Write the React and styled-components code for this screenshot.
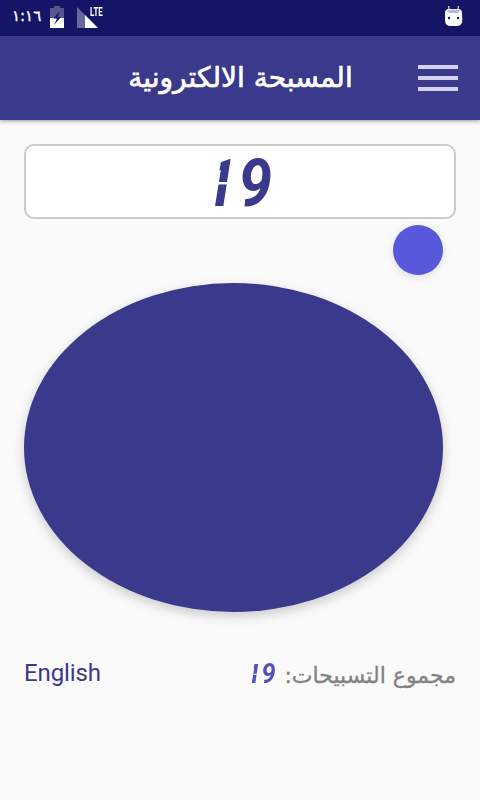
import React from "react";
import styled, { createGlobalStyle } from "styled-components";

const GlobalStyle = createGlobalStyle`
  * { box-sizing: border-box; }
  body { margin: 0; background: #fafafa; }
  button { border: 0; padding: 0; font: inherit; cursor: pointer; }
`;

const Screen = styled.div`
  display: flex;
  flex-direction: column;
  width: 480px;
  height: 800px;
  overflow: hidden;
  background: #fafafa;
  font-family: Roboto, "DejaVu Sans", sans-serif;
`;

const StatusBar = styled.div`
  display: flex;
  flex: none;
  align-items: flex-start;
  height: 36px;
  padding: 0 17px 0 12px;
  background: #141567;
`;

const Clock = styled.span`
  width: 38px;
  font: 15px/33px "DejaVu Sans", sans-serif;
  letter-spacing: -2.6px;
  white-space: nowrap;
  color: #fff;
  -webkit-text-stroke: 0.3px #fff;
`;

const StatusIcon = styled.svg`
  flex: none;
  width: ${(p) => p.$w}px;
  height: ${(p) => p.$h}px;
  margin-top: ${(p) => p.$top}px;
  margin-left: ${(p) => p.$left || 0}px;
`;

const Network = styled.span`
  margin-top: 6px;
  margin-left: -8px;
  font: 700 12px/13px Roboto, sans-serif;
  color: #fff;
  transform: scaleX(0.66);
  transform-origin: left;
`;

const Spacer = styled.div`
  flex: 1;
`;

const AppBar = styled.header`
  display: flex;
  flex: none;
  align-items: center;
  justify-content: space-between;
  height: 84px;
  padding: 0 22px 0 128px;
  background: #3a398b;
  box-shadow: 0 1px 4px rgba(0, 0, 0, 0.4);
`;

const Title = styled.h1`
  display: flex;
  justify-content: center;
  width: 225px;
  margin: 0;
  font: 400 28px/40px "DejaVu Sans", sans-serif;
  white-space: nowrap;
  color: #fff;
  -webkit-text-stroke: 0.7px #fff;
`;

const MenuButton = styled.button`
  display: flex;
  flex-direction: column;
  gap: 7px;
  width: 40px;
  background: none;
`;

const MenuLine = styled.span`
  height: 4px;
  background: #d3d3ef;
`;

const Content = styled.main`
  display: flex;
  flex-direction: column;
  padding: 24px 24px 0;
`;

const Display = styled.div`
  display: flex;
  align-items: center;
  justify-content: center;
  height: 75px;
  padding: 3px 4px 0 0;
  border: 2px solid #cbcbcb;
  border-radius: 10px;
  background: #fff;
`;

const Digits = styled.span`
  display: inline-flex;
  direction: ltr;
  font: italic 700 ${(p) => p.$size}px/0.72 Roboto, sans-serif;
  color: ${(p) => p.$color};
  transform: scaleX(0.9);
`;

/* The one is only a slanted stem, split in the middle like two LED segments. */
const Digit = styled.span`
  display: flex;
  justify-content: center;
  width: 0.58em;
  height: 0.72em;
  ${(p) =>
    p.$stem &&
    `
      clip-path: polygon(53% 0, 100% 0, 100% 100%, 29% 100%);
      mask-image: linear-gradient(#000 47%, transparent 49% 52%, #000 54%);
    `}
`;

const RoundButton = styled.button`
  align-self: ${(p) => (p.$small ? "flex-end" : "flex-start")};
  width: ${(p) => (p.$small ? 50 : 419)}px;
  height: ${(p) => (p.$small ? 50 : 329)}px;
  margin-top: ${(p) => (p.$small ? 6 : 8)}px;
  margin-right: ${(p) => (p.$small ? 13 : 0)}px;
  border-radius: 50%;
  background: ${(p) => (p.$small ? "#5858db" : "#3a398b")};
  box-shadow: ${(p) =>
    p.$small
      ? "0 2px 8px rgba(0, 0, 0, 0.12)"
      : "0 4px 12px rgba(0, 0, 0, 0.2)"};
`;

const Footer = styled.footer`
  display: flex;
  align-items: center;
  justify-content: space-between;
  height: 36px;
  margin-top: 44px;
`;

const Language = styled.button`
  background: none;
  margin-top: -2px;
  font: 24px/32px Roboto, sans-serif;
  letter-spacing: -0.1px;
  color: #3a398b;
`;

const Total = styled.div`
  display: flex;
  align-items: center;
  gap: 7px;
  direction: rtl;
`;

const TotalLabel = styled.span`
  display: flex;
  justify-content: flex-start;
  width: 172px;
  margin-top: 4px;
  font: 22px/32px "DejaVu Sans", sans-serif;
  white-space: nowrap;
  color: #828282;
  -webkit-text-stroke: 0.3px #828282;
`;

function LedNumber({ value, size, color }) {
  return (
    <Digits $size={size} $color={color}>
      {String(value).split("").map((digit, i) => (
        <Digit key={i} $stem={digit === "1"}>{digit}</Digit>
      ))}
    </Digits>
  );
}

export default function App() {
  const count = 19;
  return (
    <Screen>
      <GlobalStyle />
      <StatusBar>
        <Clock>١:١٦</Clock>
        <StatusIcon $w={14} $h={22} $top={6} viewBox="0 0 14 22">
          <path d="M4 0h6v2h4v10H0V2h4z" fill="#57568f" />
          <path d="M0 12h14v10H0z" fill="#fff" />
          <path d="M10 5 3 12.5h4L4 19l7-8H7.5z" fill="#141567" />
        </StatusIcon>
        <StatusIcon $w={21} $h={21} $top={7} $left={13} viewBox="0 0 21 21">
          <path d="M0 0v21h21z" fill="#6867a0" />
          <path d="M8 8v13h13z" fill="#fff" />
        </StatusIcon>
        <Network>LTE</Network>
        <Spacer />
        <StatusIcon $w={19} $h={22} $top={5} viewBox="0 0 19 22">
          <path d="m4.5 1 1 5M14.5 1l-1 5" stroke="#e5e5f3" strokeWidth="1.2" />
          <path d="M1 8Q1 4 5 4h9q4 0 4 4l.3 7q0 6-6 6H7q-6 0-6-6z" fill="#fff" />
          <path d="M3 6Q4 4.5 9.5 4.5T16 6L14 8H5z" fill="#b9b9d8" />
          <circle cx="5" cy="13" r="1.2" fill="#141567" />
          <circle cx="14" cy="13" r="1.2" fill="#141567" />
        </StatusIcon>
      </StatusBar>
      <AppBar>
        <Title dir="rtl">المسبحة الالكترونية</Title>
        <MenuButton aria-label="القائمة">
          <MenuLine />
          <MenuLine />
          <MenuLine />
        </MenuButton>
      </AppBar>
      <Content>
        <Display>
          <LedNumber value={count} size={67} color="#3a398b" />
        </Display>
        <RoundButton $small />
        <RoundButton />
        <Footer>
          <Language>English</Language>
          <Total>
            <TotalLabel>مجموع التسبيحات:</TotalLabel>
            <LedNumber value={count} size={28} color="#5151bb" />
          </Total>
        </Footer>
      </Content>
    </Screen>
  );
}
